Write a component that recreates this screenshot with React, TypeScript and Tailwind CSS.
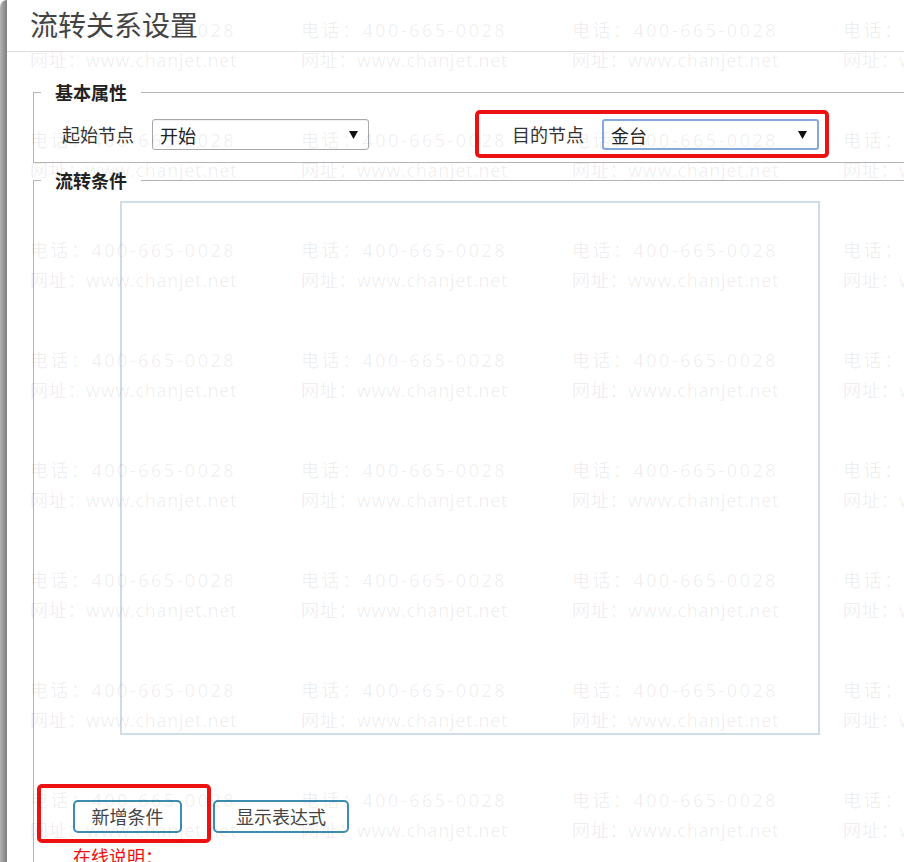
import React from 'react';

const cjk = { fontFamily: '"Noto Sans CJK SC", "Noto Sans", sans-serif' };

const Caret: React.FC = () => (
  <svg width="9" height="8" viewBox="0 0 9 8" aria-hidden="true">
    <path d="M0 0 L9 0 L4.5 8 Z" fill="#111" />
  </svg>
);

const FakeSelect: React.FC<{ value: string; focused?: boolean }> = ({ value, focused }) => (
  <div
    className={
      'w-[217px] h-[31px] flex items-center justify-between pl-[7px] pr-[10px] rounded-[3px] bg-white text-[18px] text-[#222] ' +
      (focused ? 'border-2 border-[#86a9dc]' : 'border border-[#a8a8a8] shadow-[inset_0_1px_1px_rgba(0,0,0,0.06)]')
    }
  >
    <span className="leading-none">{value}</span>
    <Caret />
  </div>
);

const Watermark: React.FC = () => {
  const cols = [30, 301, 572, 843];
  const rows = [0, 1, 2, 3, 4, 5, 6, 7];
  return (
    <div className="absolute inset-0 overflow-hidden pointer-events-none select-none">
      {rows.map((r) =>
        cols.map((c) => (
          <div
            key={`${r}-${c}`}
            className="absolute whitespace-nowrap text-[18px] leading-[30px] text-black/[0.07]"
            style={{ left: c, top: 15 + r * 110, fontFamily: '"Open Sans", "Noto Sans CJK SC", sans-serif' }}
          >
            <div className="tracking-[2.5px]">电话：400-665-0028</div>
            <div className="tracking-[0.7px]">网址：www.chanjet.net</div>
          </div>
        ))
      )}
    </div>
  );
};

export default function App() {
  return (
    <div className="relative w-full h-[862px] overflow-hidden bg-white" style={cjk}>
      <div className="h-full flex">
        {/* window edge */}
        <div className="w-[7px] shrink-0 rounded-tl-[7px] bg-gradient-to-r from-[#b4b4b4] to-[#7d7d7d]" />

        <div className="flex-1 min-w-0 flex flex-col">
          <div className="h-[52px] shrink-0 border-b border-[#dcdcdc] pl-[23px] flex items-center">
            <h1 className="text-[28px] leading-none text-[#444] font-normal -mt-[4px]">流转关系设置</h1>
          </div>

          <div className="pl-[26px] mt-[28px]">
            <fieldset className="w-[900px] border border-[#b4b4b4] border-r-0 pb-[12px]">
              <legend className="ml-[7px] px-[14px] text-[18px] leading-[24px] font-bold text-[#222]">基本属性</legend>
              <div className="flex items-center pt-[15px] pl-[28px]">
                <span className="text-[18px] text-[#333] mr-[18px]">起始节点</span>
                <FakeSelect value="开始" />
                <div className="relative flex items-center ml-[143px]">
                  <span className="text-[18px] text-[#333] mr-[18px]">目的节点</span>
                  <FakeSelect value="金台" focused />
                  <span className="absolute -left-[37px] -right-[10px] -top-[9px] -bottom-[8px] border-4 border-[#ee1111] rounded-[5px]" />
                </div>
              </div>
            </fieldset>

            <fieldset className="w-[900px] mt-[5px] border border-[#b4b4b4] border-r-0 border-b-0 pb-[40px]">
              <legend className="ml-[7px] px-[14px] text-[18px] leading-[24px] font-bold text-[#222]">流转条件</legend>
              <div className="pt-[9px] pl-[86px]">
                <div className="w-[700px] h-[534px] border-2 border-[#cfdce6] bg-white" />
              </div>
              <div className="flex items-center gap-[31px] pl-[39px] mt-[65px]">
                <div className="relative">
                  <button className="w-[109px] h-[33px] rounded-[5px] border-2 border-[#3d8db0] bg-white text-[18px] text-[#444]">
                    新增条件
                  </button>
                  <span className="absolute -left-[36px] -right-[29px] -top-[16px] -bottom-[10px] border-4 border-[#ee1111] rounded-[5px] pointer-events-none" />
                </div>
                <button className="w-[136px] h-[33px] rounded-[5px] border-2 border-[#3d8db0] bg-white text-[18px] text-[#444]">
                  显示表达式
                </button>
              </div>
              <div className="pl-[39px] mt-[11px] text-[18px] leading-[24px] text-[#ee1111]">在线说明：</div>
            </fieldset>
          </div>
        </div>
      </div>
      <Watermark />
    </div>
  );
}
